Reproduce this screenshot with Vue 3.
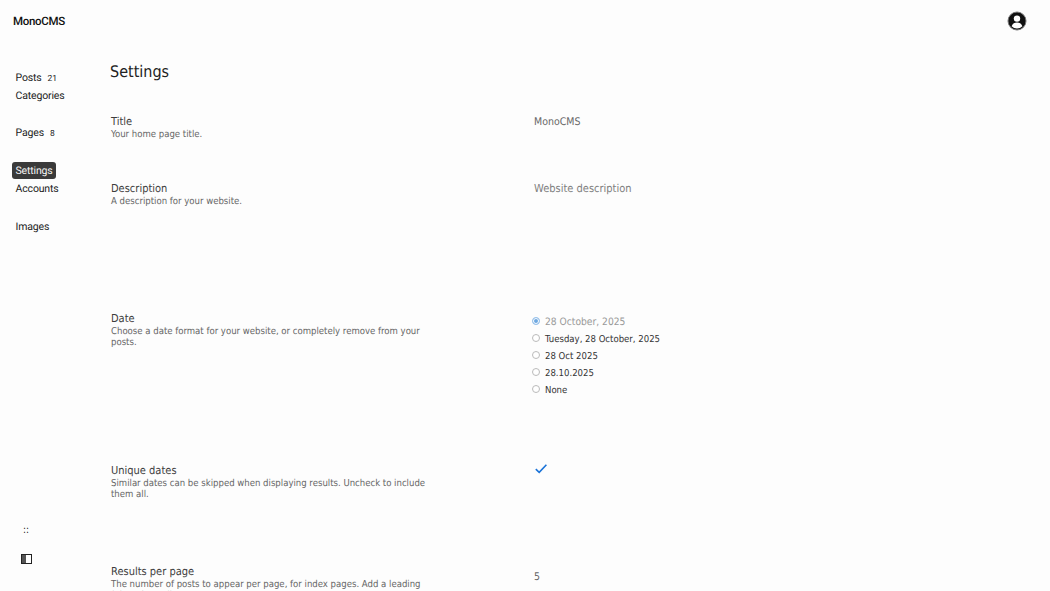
<template>
  <div class="page">
    <header class="topbar">
      <span class="brand">MonoCMS</span>
      <button class="avatar" aria-label="Account">
        <svg width="20" height="20" viewBox="0 0 20 20">
          <circle cx="10" cy="10" r="9" fill="#111" stroke="#777" stroke-width="1" />
          <circle cx="10" cy="7.6" r="3.2" fill="#fff" />
          <path d="M4.6 15.2c1-2.6 3-3.6 5.4-3.6s4.400 1 5.400 3.600a7.400 7.400 0 0 1-10.800 0z" fill="#fff" />
        </svg>
      </button>
    </header>

    <div class="body">
      <aside class="sidebar">
        <nav class="nav">
          <div v-for="(group, i) in navGroups" :key="i" class="nav-group">
            <a
              v-for="item in group"
              :key="item.label"
              class="nav-item"
              :class="{ active: item.active }"
            >
              {{ item.label }}<span v-if="item.count" class="count">{{ item.count }}</span>
            </a>
          </div>
        </nav>
        <div class="side-tools">
          <span class="dots">::</span>
          <svg class="panel" width="11" height="10" viewBox="0 0 11 10">
            <rect x="0.5" y="0.5" width="10" height="9" fill="#fff" stroke="#222" />
            <rect x="1" y="1" width="4" height="8" fill="#555" />
          </svg>
        </div>
      </aside>

      <main class="content">
        <h1>Settings</h1>

        <section class="row row-title">
          <div class="info">
            <h2>Title</h2>
            <p>Your home page title.</p>
          </div>
          <div class="control text"><span class="value">MonoCMS</span></div>
        </section>

        <section class="row row-desc">
          <div class="info">
            <h2>Description</h2>
            <p>A description for your website.</p>
          </div>
          <div class="control text"><span class="placeholder">Website description</span></div>
        </section>

        <section class="row row-date">
          <div class="info">
            <h2>Date</h2>
            <p>Choose a date format for your website, or completely remove from your posts.</p>
          </div>
          <div class="control radios">
            <label v-for="(opt, i) in dateFormats" :key="opt" class="radio" :class="{ selected: i === 0 }">
              <span class="dot"></span>{{ opt }}
            </label>
          </div>
        </section>

        <section class="row row-unique">
          <div class="info">
            <h2>Unique dates</h2>
            <p>Similar dates can be skipped when displaying results. Uncheck to include them all.</p>
          </div>
          <div class="control">
            <svg class="check" width="12" height="10" viewBox="0 0 12 10">
              <path d="M0.800 5.200 4.200 8.400 11.400 0.800" fill="none" stroke="#1a73d8" stroke-width="1.600" />
            </svg>
          </div>
        </section>

        <section class="row">
          <div class="info">
            <h2>Results per page</h2>
            <p>The number of posts to appear per page, for index pages. Add a leading (0) to show all posts on a page.</p>
          </div>
          <div class="control"><span class="value">5</span></div>
        </section>
      </main>
    </div>
  </div>
</template>

<script setup>
const navGroups = [
  [{ label: "Posts", count: 21 }, { label: "Categories" }],
  [{ label: "Pages", count: 8 }],
  [{ label: "Settings", active: true }, { label: "Accounts" }],
  [{ label: "Images" }],
];

const dateFormats = [
  "28 October, 2025",
  "Tuesday, 28 October, 2025",
  "28 Oct 2025",
  "28.10.2025",
  "None",
];
</script>

<style>
html,
body {
  margin: 0;
  height: 100%;
  overflow: hidden;
  background: #fdfdfd;
}
</style>

<style scoped>
.page {
  width: 1050px;
  height: 591px;
  overflow: hidden;
  font-family: "DejaVu Sans Condensed", "DejaVu Sans", sans-serif;
  font-stretch: condensed;
  text-rendering: geometricPrecision;
  color: #333;
}

.topbar {
  display: flex;
  justify-content: space-between;
  align-items: center;
  height: 42px;
  padding: 0 23px 0 13px;
}

.brand {
  font-family: Roboto, sans-serif;
  font-stretch: normal;
  font-weight: 500;
  font-size: 11.500px;
  letter-spacing: -0.3px;
  color: #111;
  margin-top: -1px;
}

.avatar {
  display: flex;
  padding: 0;
  border: 0;
  background: none;
}

.body {
  display: flex;
  height: 549px;
}

.sidebar {
  width: 109px;
  flex: none;
  display: flex;
  flex-direction: column;
  justify-content: space-between;
  padding: 27px 0 27px 12px;
  box-sizing: border-box;
}

.nav {
  display: flex;
  flex-direction: column;
  gap: 21px;
  font-family: Roboto, sans-serif;
  font-stretch: normal;
  font-size: 10.500px;
  letter-spacing: -0.15px;
}

.nav-group {
  display: flex;
  flex-direction: column;
  align-items: flex-start;
  gap: 1px;
}

.nav-group:first-child {
  margin-bottom: -1px;
}

.nav-item {
  display: flex;
  align-items: baseline;
  height: 17px;
  line-height: 17px;
  padding: 0 3.500px;
  border-radius: 3px;
  color: #222;
}

.nav-item.active {
  background: #3a3a3a;
  color: #f5f5f5;
}

.count {
  margin-left: 6px;
  font-size: 8.500px;
}

.side-tools {
  display: flex;
  flex-direction: column;
  align-items: flex-start;
  gap: 17px;
  padding-left: 9px;
}

.dots {
  font-size: 10px;
  line-height: 12px;
  color: #222;
  padding-left: 2px;
}

.content {
  flex: 1;
  padding-top: 20px;
}

h1 {
  margin: 0 0 33px 1px;
  font-size: 16px;
  font-weight: 400;
  line-height: 20px;
  color: #222;
}

.row {
  display: grid;
  grid-template-columns: 423px 1fr;
  padding-left: 2px;
}

.row-title {
  height: 67px;
}

.row-desc {
  height: 130px;
}

.row-date {
  height: 152px;
}

.row-unique {
  height: 101px;
}

h2 {
  margin: 0;
  font-size: 11px;
  font-weight: 400;
  line-height: 14px;
  color: #3d3d3d;
}

.info p {
  margin: 0;
  width: 320px;
  font-size: 9.500px;
  line-height: 11px;
  color: #666;
}

.control.text {
  margin-top: -5px;
}

.value {
  font-size: 10.500px;
  line-height: 14px;
  color: #666;
}

.placeholder {
  font-size: 11px;
  line-height: 14px;
  color: #808080;
}

.radios {
  display: flex;
  flex-direction: column;
  gap: 3px;
  margin: 3px 0 0 -2px;
}

.radio {
  display: flex;
  align-items: center;
  height: 14px;
  font-size: 9.500px;
  color: #333;
}

.radio.selected {
  font-size: 10.200px;
  color: #999;
}

.dot {
  width: 6px;
  height: 6px;
  margin: -2px 5px 0 0;
  border: 1px solid #bbb;
  border-radius: 50%;
  background: #fff;
}

.selected .dot {
  border-color: #9cc4ec;
  background: #6ea8e0;
  box-shadow: inset 0 0 0 1px #fff;
}

.check {
  display: block;
  margin-left: 1px;
}
</style>
